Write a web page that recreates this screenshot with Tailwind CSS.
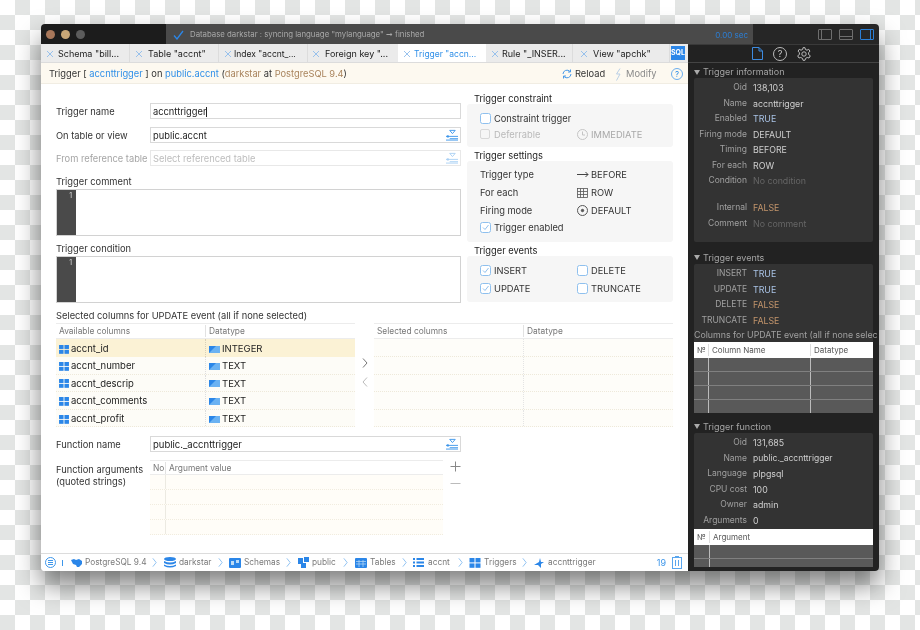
<!DOCTYPE html>
<html>
<head>
<meta charset="utf-8">
<script src="https://cdn.jsdelivr.net/npm/@tailwindcss/browser@4"></script>
</head>
<body class="m-0">
<svg width="0" height="0" class="absolute">
  <symbol id="grid" viewBox="0 0 11 10"><rect x="0" y="0" width="5" height="4.4" fill="#2b86e8"/><rect x="6" y="0" width="5" height="4.4" fill="#2b86e8"/><rect x="0" y="5.4" width="5" height="4.4" fill="#2b86e8"/><rect x="6" y="5.4" width="5" height="4.4" fill="#2b86e8"/></symbol>
  <symbol id="dtype" viewBox="0 0 11 7"><rect width="11" height="7" fill="#2b86e8"/><path d="M0 7 L7 0 H11 V7Z" fill="#6bb2f2"/></symbol>
  <symbol id="pick" viewBox="0 0 13 12" fill="none" stroke="currentColor"><path d="M0 7.5H13M4 10H13M0 11.5H13" stroke-width="1"/><path d="M4 1H10L7 4.5Z" fill="none" stroke-width="1"/><circle cx="2" cy="7.5" r="1.3" fill="currentColor" stroke="none"/></symbol>
  <symbol id="chev" viewBox="0 0 6 12" fill="none"><path d="M1 1L5 6L1 11" stroke="#7db8ef" stroke-width="1"/></symbol>
  <symbol id="check" viewBox="0 0 11 11" fill="none"><rect x=".5" y=".5" width="10" height="10" rx="2" fill="#fff" stroke="#8fc0ee"/><path d="M3 5.5L5 7.5L8.5 3" stroke="#8fc0ee"/></symbol>
  <symbol id="box" viewBox="0 0 11 11" fill="none"><rect x=".5" y=".5" width="10" height="10" rx="2" fill="#fff" stroke="#8fc0ee"/></symbol>
  <symbol id="x" viewBox="0 0 8 8" fill="none"><path d="M1 1L7 7M7 1L1 7" stroke="#8fbcec" stroke-width=".9"/></symbol>
</svg>

<div class="w-[920px] h-[630px] overflow-hidden pt-[24px] pl-[41px] font-['Inter',sans-serif] bg-[conic-gradient(#e3e5e4_25%,#ffffff_0_50%,#e3e5e4_0_75%,#ffffff_0)] bg-[length:30px_30px]">
  <div class="w-[838px] h-[547px] flex flex-col rounded-[4px] overflow-hidden shadow-[0_14px_26px_rgba(0,0,0,0.5)] blur-[0.25px]">

    <!-- title bar -->
    <div class="h-[20px] flex shrink-0">
      <div class="w-[125px] bg-[#1c1c1c] flex items-center gap-[6px] pl-[5px]">
        <span class="w-[9px] h-[9px] rounded-full bg-[#a8775a]"></span>
        <span class="w-[9px] h-[9px] rounded-full bg-[#c9a777]"></span>
        <span class="w-[9px] h-[9px] rounded-full bg-[#5c5c5c]"></span>
      </div>
      <div class="w-[587px] bg-[#4a4a4a] flex items-center pl-[7px] pr-[5px] pt-[2px] text-[7.8px] text-[#a9a9a9]">
        <svg class="w-[11px] h-[10px] mr-[6px]" viewBox="0 0 11 10" fill="none"><path d="M1 5.5L4 9L10 1" stroke="#2b86e8" stroke-width="1.3"/></svg>
        <span>Database darkstar : syncing language "mylanguage" ➞ finished</span>
        <span class="ml-auto text-[#2b7fd6] text-[8px]">0.00 sec</span>
      </div>
      <div class="flex-1 bg-[#262626] flex items-center justify-end gap-[7px] pr-[5px]">
        <span class="w-[14px] h-[11px] border border-[#6e6e6e] rounded-[1px] flex"><span class="w-[3px] border-r border-[#6e6e6e]"></span></span>
        <span class="w-[14px] h-[11px] border border-[#6e6e6e] rounded-[1px] flex items-end"><span class="w-full h-[3px] border-t border-[#6e6e6e]"></span></span>
        <span class="w-[14px] h-[11px] border border-[#2b7fd6] rounded-[1px] flex justify-end"><span class="w-[3px] border-l border-[#2b7fd6]"></span></span>
      </div>
    </div>

    <div class="flex flex-1 min-h-0">
      <!-- main -->
      <div class="w-[647px] bg-white flex flex-col">
        <!-- tabs -->
        <div class="h-[19px] flex shrink-0 bg-[#ebebeb] text-[9px] text-[#222] border-b border-[#dcdcdc]">
          <div class="w-[89px] flex items-center pl-[5px] pt-[2px] gap-[4px] border-r border-[#dcdcdc]"><svg class="w-[8px] h-[8px] shrink-0"><use href="#x"/></svg><span>Schema "bill...</span></div>
          <div class="w-[89px] flex items-center pl-[5px] pt-[2px] gap-[5px] border-r border-[#dcdcdc]"><svg class="w-[8px] h-[8px] shrink-0"><use href="#x"/></svg><span>Table "accnt"</span></div>
          <div class="w-[89px] flex items-center pl-[5px] pt-[2px] gap-[2px] border-r border-[#dcdcdc]"><svg class="w-[8px] h-[8px] shrink-0"><use href="#x"/></svg><span class="text-[8.5px]">Index "accnt_...</span></div>
          <div class="w-[90px] flex items-center pl-[4px] pt-[2px] gap-[5px]"><svg class="w-[8px] h-[8px] shrink-0"><use href="#x"/></svg><span>Foreign key "...</span></div>
          <div class="w-[88px] flex items-center pl-[5px] pt-[2px] gap-[3px] bg-white text-[#2f8fe8]"><svg class="w-[8px] h-[8px] shrink-0"><use href="#x"/></svg><span class="text-[8.5px]">Trigger "accn...</span></div>
          <div class="w-[87px] flex items-center pl-[5px] pt-[2px] gap-[3px] border-r border-[#dcdcdc]"><svg class="w-[8px] h-[8px] shrink-0"><use href="#x"/></svg><span>Rule "_INSER...</span></div>
          <div class="w-[97px] flex items-center pl-[7px] pt-[2px] gap-[5px] border-r border-[#dcdcdc]"><svg class="w-[8px] h-[8px] shrink-0"><use href="#x"/></svg><span>View "apchk"</span></div>
          <div class="flex-1 flex items-center justify-start pl-[1px]"><span class="w-[14px] h-[14px] bg-[#2b86e8] text-white text-[7px] font-bold leading-[13px] text-center">SQL</span></div>
        </div>
        <!-- info bar -->
        <div class="h-[21px] flex items-center shrink-0 bg-[#fdf9f0] pl-[8px] pr-[5px] pt-[2px] text-[9.3px] text-[#333] border-b border-[#f1ede3]">
          <span>Trigger [ <span class="text-[#2f8fe8]">accnttrigger</span> ] on <span class="text-[#2f8fe8]">public.accnt</span> (<span class="text-[#a9845d]">darkstar</span> at <span class="text-[#a9845d]">PostgreSQL 9.4</span>)</span>
          <svg class="ml-auto w-[10px] h-[10px]" viewBox="0 0 10 10" fill="none" stroke="#4a9ae8"><path d="M1 5A4 4 0 0 1 8 2.5M9 5A4 4 0 0 1 2 7.5"/><path d="M8.5 .5V3H6M1.5 9.5V7H4"/></svg>
          <span class="ml-[3px] w-[40px]">Reload</span>
          <svg class="w-[7px] h-[13px]" viewBox="0 0 7 13" fill="none" stroke="#b9cfe6"><path d="M5 .5L1.5 6H5L1.5 12.5"/></svg>
          <span class="ml-[4px] w-[45px] text-[#8a8a8a]">Modify</span>
          <span class="w-[12px] h-[12px] rounded-full border border-[#6caeee] text-[#2f8fe8] text-[8px] leading-[10px] text-center">?</span>
        </div>

        <!-- upper form -->
        <div class="h-[225px] flex shrink-0 text-[9.3px] text-[#333]">
          <div class="w-[405px] ml-[15px] pt-[19px]">
            <div class="flex h-[16px] items-center mb-[8px]"><span class="w-[94px] pt-[2px]">Trigger name</span><div class="flex-1 h-full border border-[#d9d9d9] flex items-center pl-[2px] pt-[1px] text-[#222]"><span class="border-r border-[#222] leading-[10px]">accnttrigger</span></div></div>
            <div class="flex h-[16px] items-center mb-[7px]"><span class="w-[94px] pt-[2px]">On table or view</span><div class="flex-1 h-full border border-[#d9d9d9] flex items-center pl-[2px] pr-[2px] text-[#222] justify-between"><span class="pt-[1px]">public.accnt</span><svg class="w-[12px] h-[12px] text-[#3d96ea]"><use href="#pick"/></svg></div></div>
            <div class="flex h-[16px] items-center"><span class="w-[94px] pt-[2px] text-[#a5a5a5] whitespace-nowrap">From reference table</span><div class="flex-1 h-full border border-[#e8e8e8] flex items-center pl-[2px] pr-[2px] text-[#bdbdbd] justify-between"><span class="pt-[1px]">Select referenced table</span><svg class="w-[12px] h-[12px] text-[#a9d0f4]"><use href="#pick"/></svg></div></div>
            <div class="h-[12px] leading-[12px] mt-[10px] mb-[1px]">Trigger comment</div>
            <div class="h-[47px] border border-[#d2d2d2] flex"><div class="w-[19px] bg-[#4a4a4a] text-[7px] text-[#ddd] text-right pr-[4px] leading-[11px]">1</div></div>
            <div class="h-[12px] leading-[12px] mt-[7px] mb-[1px]">Trigger condition</div>
            <div class="h-[47px] border border-[#d2d2d2] flex"><div class="w-[19px] bg-[#4a4a4a] text-[7px] text-[#ddd] text-right pr-[4px] leading-[11px]">1</div></div>
          </div>
          <div class="w-[206px] ml-[6px] pt-[8px]">
            <div class="h-[12px] leading-[12px] pl-[7px] pt-[1px] text-[#222]">Trigger constraint</div>
            <div class="h-[43px] bg-[#f6f6f6] rounded-[3px] pl-[13px] pt-[8px]">
              <div class="flex items-center h-[12px] mb-[4px]"><svg class="w-[11px] h-[11px] mr-[3px]"><use href="#box"/></svg><span class="pt-[1px]">Constraint trigger</span></div>
              <div class="flex items-center h-[12px] text-[#b9b9b9]"><span class="w-[10px] h-[10px] rounded-[2px] border border-[#d8d8d8] mr-[4px]"></span><span class="w-[83px] pt-[1px]">Deferrable</span><svg class="w-[11px] h-[11px] mr-[3px]" viewBox="0 0 11 11" fill="none" stroke="#c4c4c4"><circle cx="5.5" cy="5.5" r="5"/><path d="M5.5 2.5V6H8"/></svg><span class="text-[#a8a8a8] pt-[1px]">IMMEDIATE</span></div>
            </div>
            <div class="h-[12px] leading-[12px] pl-[7px] pt-[1px] mt-[2px] text-[#222]">Trigger settings</div>
            <div class="h-[81px] bg-[#f6f6f6] rounded-[3px] pl-[13px] pt-[7px]">
              <div class="flex items-center h-[13px] mb-[5px]"><span class="w-[97px] pt-[1px]">Trigger type</span><svg class="w-[12px] h-[7px] mr-[2px]" viewBox="0 0 12 7" fill="none" stroke="#444"><path d="M0 3.5H11M8.5 1L11 3.5L8.5 6"/></svg><span class="pt-[1px]">BEFORE</span></div>
              <div class="flex items-center h-[13px] mb-[5px]"><span class="w-[97px] pt-[1px]">For each</span><svg class="w-[11px] h-[10px] mr-[3px]" viewBox="0 0 11 10" fill="none" stroke="#555" stroke-width=".8"><rect x=".5" y=".5" width="10" height="9"/><path d="M3.5 .5V9.5M6.5 .5V9.5M.5 3.5H10.5M.5 6.5H10.5"/></svg><span class="pt-[1px]">ROW</span></div>
              <div class="flex items-center h-[13px] mb-[4px]"><span class="w-[97px] pt-[1px]">Firing mode</span><svg class="w-[11px] h-[11px] mr-[3px]" viewBox="0 0 11 11" fill="none" stroke="#555"><circle cx="5.5" cy="5.5" r="5"/><circle cx="5.5" cy="5.5" r="1.2" fill="#555"/></svg><span class="pt-[1px]">DEFAULT</span></div>
              <div class="flex items-center h-[13px]"><svg class="w-[11px] h-[11px] mr-[3px]"><use href="#check"/></svg><span class="pt-[1px]">Trigger enabled</span></div>
            </div>
            <div class="h-[12px] leading-[12px] pl-[7px] pt-[1px] mt-[2px] text-[#222]">Trigger events</div>
            <div class="h-[46px] bg-[#f6f6f6] rounded-[3px] pl-[13px] pt-[8px]">
              <div class="flex items-center h-[13px] mb-[5px]"><svg class="w-[11px] h-[11px] mr-[3px]"><use href="#check"/></svg><span class="w-[83px] pt-[1px]">INSERT</span><svg class="w-[11px] h-[11px] mr-[3px]"><use href="#box"/></svg><span class="pt-[1px]">DELETE</span></div>
              <div class="flex items-center h-[13px]"><svg class="w-[11px] h-[11px] mr-[3px]"><use href="#check"/></svg><span class="w-[83px] pt-[1px]">UPDATE</span><svg class="w-[11px] h-[11px] mr-[3px]"><use href="#box"/></svg><span class="pt-[1px]">TRUNCATE</span></div>
            </div>
          </div>
        </div>

        <!-- columns -->
        <div class="pl-[15px] text-[9.5px] text-[#333] flex-1 min-h-0">
          <div class="h-[12px] leading-[12px] mt-[1px] mb-[1px] text-[9.3px]">Selected columns for UPDATE event (all if none selected)</div>
          <div class="flex">
            <div class="w-[299px]">
              <div class="h-[16px] flex items-center text-[8.4px] text-[#777] border-y border-[#ececec]"><span class="w-[150px] pl-[3px] border-r border-[#e2e2e2]">Available columns</span><span class="pl-[3px]">Datatype</span></div>
              <div class="h-[18px] flex items-center bg-[#fbf2d5] text-[#222]"><span class="w-[150px] pl-[3px] pt-[2px] flex items-center gap-[2px] border-r border-dotted border-[#d8d0b8] h-full"><svg class="w-[10px] h-[9px]"><use href="#grid"/></svg>accnt_id</span><span class="pl-[3px] pt-[2px] flex items-center gap-[2px]"><svg class="w-[11px] h-[7px]"><use href="#dtype"/></svg>INTEGER</span></div>
              <div class="h-[17.6px] flex items-center bg-[#fdfcf7] border-b border-dotted border-[#eee9da] text-[#222]"><span class="w-[150px] pl-[3px] pt-[2px] flex items-center gap-[2px] border-r border-dotted border-[#ddd] h-full"><svg class="w-[10px] h-[9px]"><use href="#grid"/></svg>accnt_number</span><span class="pl-[3px] pt-[2px] flex items-center gap-[2px]"><svg class="w-[11px] h-[7px]"><use href="#dtype"/></svg>TEXT</span></div>
              <div class="h-[17.6px] flex items-center bg-[#fdfcf7] border-b border-dotted border-[#eee9da] text-[#222]"><span class="w-[150px] pl-[3px] pt-[2px] flex items-center gap-[2px] border-r border-dotted border-[#ddd] h-full"><svg class="w-[10px] h-[9px]"><use href="#grid"/></svg>accnt_descrip</span><span class="pl-[3px] pt-[2px] flex items-center gap-[2px]"><svg class="w-[11px] h-[7px]"><use href="#dtype"/></svg>TEXT</span></div>
              <div class="h-[17.6px] flex items-center bg-[#fdfcf7] border-b border-dotted border-[#eee9da] text-[#222]"><span class="w-[150px] pl-[3px] pt-[2px] flex items-center gap-[2px] border-r border-dotted border-[#ddd] h-full"><svg class="w-[10px] h-[9px]"><use href="#grid"/></svg>accnt_comments</span><span class="pl-[3px] pt-[2px] flex items-center gap-[2px]"><svg class="w-[11px] h-[7px]"><use href="#dtype"/></svg>TEXT</span></div>
              <div class="h-[17.6px] flex items-center bg-[#fdfcf7] border-b border-dotted border-[#eee9da] text-[#222]"><span class="w-[150px] pl-[3px] pt-[2px] flex items-center gap-[2px] border-r border-dotted border-[#ddd] h-full"><svg class="w-[10px] h-[9px]"><use href="#grid"/></svg>accnt_profit</span><span class="pl-[3px] pt-[2px] flex items-center gap-[2px]"><svg class="w-[11px] h-[7px]"><use href="#dtype"/></svg>TEXT</span></div>
            </div>
            <div class="w-[19px] flex flex-col items-center pt-[35px] gap-[9px]">
              <svg class="w-[6px] h-[10px]" viewBox="0 0 6 10" fill="none" stroke="#777"><path d="M1 .5L5 5L1 9.5"/></svg>
              <svg class="w-[6px] h-[10px]" viewBox="0 0 6 10" fill="none" stroke="#bbb"><path d="M5 .5L1 5L5 9.5"/></svg>
            </div>
            <div class="w-[299px]">
              <div class="h-[16px] flex items-center text-[8.4px] text-[#777] border-y border-[#ececec]"><span class="w-[150px] pl-[3px] border-r border-[#e2e2e2]">Selected columns</span><span class="pl-[3px]">Datatype</span></div>
              <div class="h-[18px] flex bg-[#fefdf9] border-b border-dotted border-[#eee9da]"><span class="w-[150px] border-r border-dotted border-[#e4e4e4]"></span></div>
              <div class="h-[17.6px] flex bg-[#fefdf9] border-b border-dotted border-[#eee9da]"><span class="w-[150px] border-r border-dotted border-[#e4e4e4]"></span></div>
              <div class="h-[17.6px] flex bg-[#fefdf9] border-b border-dotted border-[#eee9da]"><span class="w-[150px] border-r border-dotted border-[#e4e4e4]"></span></div>
              <div class="h-[17.6px] flex bg-[#fefdf9] border-b border-dotted border-[#eee9da]"><span class="w-[150px] border-r border-dotted border-[#e4e4e4]"></span></div>
              <div class="h-[17.6px] flex bg-[#fefdf9] border-b border-dotted border-[#eee9da]"><span class="w-[150px] border-r border-dotted border-[#e4e4e4]"></span></div>
            </div>
          </div>

          <div class="flex h-[16px] items-center mt-[9px] mb-[8px] w-[405px]"><span class="w-[94px] pt-[2px] text-[9.3px]">Function name</span><div class="flex-1 h-full border border-[#d9d9d9] flex items-center pl-[2px] pr-[2px] text-[#222] justify-between"><span class="pt-[1px]">public._accnttrigger</span><svg class="w-[12px] h-[12px] text-[#3d96ea]"><use href="#pick"/></svg></div></div>

          <div class="flex">
            <div class="w-[94px] pt-[4px] leading-[12px] text-[9.3px]">Function arguments<br>(quoted strings)</div>
            <div class="w-[293px]">
              <div class="h-[15px] flex items-center text-[8.4px] text-[#777] border-y border-[#ececec]"><span class="w-[16px] pl-[3px] border-r border-[#e2e2e2]">No</span><span class="pl-[3px]">Argument value</span></div>
              <div class="h-[15px] bg-[#fffdf8] border-b border-dotted border-[#f1ecdf]"><div class="w-[16px] h-full border-r border-[#eceae2]"></div></div>
              <div class="h-[15px] bg-[#fffdf8] border-b border-dotted border-[#f1ecdf]"><div class="w-[16px] h-full border-r border-[#eceae2]"></div></div>
              <div class="h-[15px] bg-[#fffdf8] border-b border-dotted border-[#f1ecdf]"><div class="w-[16px] h-full border-r border-[#eceae2]"></div></div>
              <div class="h-[15px] bg-[#fffdf8] border-b border-dotted border-[#f1ecdf]"><div class="w-[16px] h-full border-r border-[#eceae2]"></div></div>
            </div>
            <div class="w-[24px] flex flex-col items-center pt-[1px] gap-[11px]">
              <svg class="w-[11px] h-[11px]" viewBox="0 0 11 11" stroke="#888"><path d="M5.5 .5V10.5M.5 5.5H10.5"/></svg>
              <svg class="w-[11px] h-[1px]" viewBox="0 0 11 1" stroke="#bbb"><path d="M.5 .5H10.5"/></svg>
            </div>
          </div>
        </div>

        <!-- status bar -->
        <div class="h-[18px] flex items-center shrink-0 border-t border-[#dcdcdc] text-[8.3px] text-[#7a7a7a] pl-[4px] pr-[6px]">
          <svg class="w-[11px] h-[11px] mr-[6px]" viewBox="0 0 11 11" fill="none" stroke="#3d96ea"><circle cx="5.5" cy="5.5" r="5"/><path d="M3 3.5H8M3 5.5H8M3 7.5H8"/></svg>
          <span class="w-[1px] h-[6px] bg-[#3d96ea] mr-[8px]"></span>
          <div class="w-[93px] flex items-center gap-[3px] pr-[7px] justify-between"><svg class="w-[11px] h-[8px] shrink-0" viewBox="0 0 11 8"><path d="M0 1 L3 0 L5 1 L8 0 L11 2 V5 L8 8 H6 L5 6 L2 5Z" fill="#2b86e8"/></svg><span class="whitespace-nowrap mr-auto">PostgreSQL 9.4</span><svg class="w-[5px] h-[11px] shrink-0"><use href="#chev"/></svg></div>
          <div class="w-[65px] flex items-center gap-[3px] pr-[6px]"><svg class="w-[12px] h-[11px] shrink-0" viewBox="0 0 12 11"><ellipse cx="6" cy="2" rx="6" ry="2" fill="#2b86e8"/><path d="M0 4Q6 7 12 4V6Q6 9 0 6ZM0 7.500Q6 10.500 12 7.500V9Q6 12 0 9Z" fill="#2b86e8"/></svg><span>darkstar</span><svg class="ml-auto w-[5px] h-[11px] shrink-0"><use href="#chev"/></svg></div>
          <div class="w-[69px] flex items-center gap-[3px] pr-[7px]"><svg class="w-[12px] h-[10px] shrink-0" viewBox="0 0 12 10"><rect width="12" height="10" rx="1" fill="#2b86e8"/><path d="M2 3H5V7H2ZM7 2H10V5H7Z" fill="#bcdcf7"/></svg><span>Schemas</span><svg class="ml-auto w-[5px] h-[11px] shrink-0"><use href="#chev"/></svg></div>
          <div class="w-[57px] flex items-center gap-[3px] pr-[7px]"><svg class="w-[11px] h-[11px] shrink-0" viewBox="0 0 11 11"><path d="M0 1H5V7H0ZM6 0H11V5H6ZM3 6H8V11H3Z" fill="#2b86e8"/></svg><span>public</span><svg class="ml-auto w-[5px] h-[11px] shrink-0"><use href="#chev"/></svg></div>
          <div class="w-[58px] flex items-center gap-[3px] pr-[6px]"><svg class="w-[12px] h-[10px] shrink-0" viewBox="0 0 12 10"><rect width="12" height="10" rx="1" fill="#2b86e8"/><path d="M1 3.500H11M1 6H11M4 2V9M8 2V9" stroke="#bcdcf7" stroke-width=".7"/></svg><span>Tables</span><svg class="ml-auto w-[5px] h-[11px] shrink-0"><use href="#chev"/></svg></div>
          <div class="w-[56px] flex items-center gap-[4px] pr-[6px]"><svg class="w-[11px] h-[9px] shrink-0" viewBox="0 0 11 9"><path d="M0 0H2V2H0ZM3.500 0H11V2H3.500ZM0 3.500H2V5.500H0ZM3.500 3.500H11V5.500H3.500ZM0 7H2V9H0ZM3.500 7H11V9H3.500Z" fill="#2b86e8"/></svg><span>accnt</span><svg class="ml-auto w-[5px] h-[11px] shrink-0"><use href="#chev"/></svg></div>
          <div class="w-[65px] flex items-center gap-[3px] pr-[7px]"><svg class="w-[12px] h-[10px] shrink-0"><use href="#grid"/></svg><span>Triggers</span><svg class="ml-auto w-[5px] h-[11px] shrink-0"><use href="#chev"/></svg></div>
          <div class="flex items-center gap-[4px]"><svg class="w-[10px] h-[10px] shrink-0" viewBox="0 0 10 10"><path d="M0 7L5 4L6 0L7 4H10L7 6V10L4 7Z" fill="#2b86e8"/></svg><span>accnttrigger</span></div>
          <span class="ml-auto text-[#3d96ea] mr-[6px] text-[9px]">19</span>
          <svg class="w-[10px] h-[13px]" viewBox="0 0 10 13" fill="none" stroke="#5aa6ee"><rect x=".5" y="1.500" width="9" height="11"/><path d="M3 0.500H7M3.500 4V10M6.500 4V10"/></svg>
        </div>
      </div>

      <!-- right panel -->
      <div class="w-[191px] bg-[#222] border-t border-[#3a3a3a] text-[8.5px] text-[#cfcfcf]">
        <div class="h-[18px] flex items-center justify-center gap-[10px] border-b border-[#444] pr-[4px]">
          <svg class="w-[11px] h-[13px]" viewBox="0 0 11 13" fill="none" stroke="#3d8be0"><path d="M.5 .5H7L10.500 4V12.500H.5ZM7 .5V4H10.500"/></svg>
          <span class="w-[14px] h-[14px] rounded-full border border-[#bbb] text-[#ccc] text-[9px] leading-[12px] text-center">?</span>
          <svg class="w-[14px] h-[14px]" viewBox="0 0 14 14" fill="none" stroke="#bbb"><circle cx="7" cy="7" r="2.200"/><path d="M6 .7H8L8.400 2.500L10 3.200L11.700 2.300L13 4.200L11.600 5.500V7.500L13.300 8.800L12 11L10.200 10.500L8.600 11.400L8 13.300H6L5.500 11.400L3.800 10.500L2 11L.7 8.800L2.400 7.500V5.500L1 4.200L2.300 2.300L4 3.200L5.600 2.500Z"/></svg>
        </div>
        <div class="px-[6px]">
          <div class="h-[15px] pt-[3px] flex items-center gap-[3px] text-[9px] text-[#a5a5a5]"><span class="w-0 h-0 border-x-[3px] border-x-transparent border-t-[5px] border-t-[#aaa]"></span>Trigger information</div>
          <div class="h-[164px] bg-[#333] rounded-[2px] pt-[1px]">
            <div class="flex h-[15.500px] pt-[2px] items-center"><span class="w-[53px] text-right text-[#a0a0a0]">Oid</span><span class="ml-[6px] text-[8.800px]">138,103</span></div>
            <div class="flex h-[15.500px] pt-[2px] items-center"><span class="w-[53px] text-right text-[#a0a0a0]">Name</span><span class="ml-[6px] text-[8.800px]">accnttrigger</span></div>
            <div class="flex h-[15.500px] pt-[2px] items-center"><span class="w-[53px] text-right text-[#a0a0a0]">Enabled</span><span class="ml-[6px] text-[8.800px] text-[#a9c3e6]">TRUE</span></div>
            <div class="flex h-[15.500px] pt-[2px] items-center"><span class="w-[53px] text-right text-[#a0a0a0] whitespace-nowrap">Firing mode</span><span class="ml-[6px] text-[8.800px]">DEFAULT</span></div>
            <div class="flex h-[15.500px] pt-[2px] items-center"><span class="w-[53px] text-right text-[#a0a0a0]">Timing</span><span class="ml-[6px] text-[8.800px]">BEFORE</span></div>
            <div class="flex h-[15.500px] pt-[2px] items-center"><span class="w-[53px] text-right text-[#a0a0a0]">For each</span><span class="ml-[6px] text-[8.800px]">ROW</span></div>
            <div class="flex h-[15.500px] pt-[2px] items-center mb-[11.500px]"><span class="w-[53px] text-right text-[#a0a0a0]">Condition</span><span class="ml-[6px] text-[8.800px] text-[#666]">No condition</span></div>
            <div class="flex h-[15.500px] pt-[2px] items-center"><span class="w-[53px] text-right text-[#a0a0a0]">Internal</span><span class="ml-[6px] text-[8.800px] text-[#c2946b]">FALSE</span></div>
            <div class="flex h-[15.500px] pt-[2px] items-center"><span class="w-[53px] text-right text-[#a0a0a0]">Comment</span><span class="ml-[6px] text-[8.800px] text-[#666]">No comment</span></div>
          </div>
          <div class="h-[15px] pt-[2px] mt-[7px] flex items-center gap-[3px] text-[9px] text-[#a5a5a5]"><span class="w-0 h-0 border-x-[3px] border-x-transparent border-t-[5px] border-t-[#aaa]"></span>Trigger events</div>
          <div class="h-[148px] bg-[#333] rounded-[2px] pt-[1px]">
            <div class="flex h-[15.500px] pt-[2px] items-center"><span class="w-[53px] text-right text-[#a0a0a0]">INSERT</span><span class="ml-[6px] text-[8.800px] text-[#a9c3e6]">TRUE</span></div>
            <div class="flex h-[15.500px] pt-[2px] items-center"><span class="w-[53px] text-right text-[#a0a0a0]">UPDATE</span><span class="ml-[6px] text-[8.800px] text-[#a9c3e6]">TRUE</span></div>
            <div class="flex h-[15.500px] pt-[2px] items-center"><span class="w-[53px] text-right text-[#a0a0a0]">DELETE</span><span class="ml-[6px] text-[8.800px] text-[#c2946b]">FALSE</span></div>
            <div class="flex h-[15.500px] pt-[2px] items-center"><span class="w-[53px] text-right text-[#a0a0a0]">TRUNCATE</span><span class="ml-[6px] text-[8.800px] text-[#c2946b]">FALSE</span></div>
            <div class="h-[15px] leading-[16px] text-[8.800px] whitespace-nowrap text-[#a0a0a0]">Columns for UPDATE event (all if none selec</div>
            <div class="h-[16px] bg-white flex items-center text-[8px] text-[#555]"><span class="w-[15px] pl-[3px] border-r border-[#ddd]">№</span><span class="w-[102px] pl-[3px] border-r border-[#ddd]">Column Name</span><span class="pl-[3px]">Datatype</span></div>
            <div class="h-[14px] bg-[#595959] flex border-b border-[#808080]"><span class="w-[15px] border-r border-[#bbb]"></span><span class="w-[102px] border-r border-[#bbb]"></span></div>
            <div class="h-[14px] bg-[#595959] flex border-b border-[#808080]"><span class="w-[15px] border-r border-[#bbb]"></span><span class="w-[102px] border-r border-[#bbb]"></span></div>
            <div class="h-[14px] bg-[#595959] flex border-b border-[#808080]"><span class="w-[15px] border-r border-[#bbb]"></span><span class="w-[102px] border-r border-[#bbb]"></span></div>
            <div class="h-[13px] bg-[#595959] flex"><span class="w-[15px] border-r border-[#bbb]"></span><span class="w-[102px] border-r border-[#bbb]"></span></div>
          </div>
          <div class="h-[15px] pt-[2px] mt-[6px] flex items-center gap-[3px] text-[9px] text-[#a5a5a5]"><span class="w-0 h-0 border-x-[3px] border-x-transparent border-t-[5px] border-t-[#aaa]"></span>Trigger function</div>
          <div class="h-[133px] bg-[#333] rounded-[2px] pt-[1px]">
            <div class="flex h-[15.500px] pt-[2px] items-center"><span class="w-[53px] text-right text-[#a0a0a0]">Oid</span><span class="ml-[6px] text-[8.800px]">131,685</span></div>
            <div class="flex h-[15.500px] pt-[2px] items-center"><span class="w-[53px] text-right text-[#a0a0a0]">Name</span><span class="ml-[6px] text-[8.500px]">public._accnttrigger</span></div>
            <div class="flex h-[15.500px] pt-[2px] items-center"><span class="w-[53px] text-right text-[#a0a0a0]">Language</span><span class="ml-[6px] text-[8.800px]">plpgsql</span></div>
            <div class="flex h-[15.500px] pt-[2px] items-center"><span class="w-[53px] text-right text-[#a0a0a0]">CPU cost</span><span class="ml-[6px] text-[8.800px]">100</span></div>
            <div class="flex h-[15.500px] pt-[2px] items-center"><span class="w-[53px] text-right text-[#a0a0a0]">Owner</span><span class="ml-[6px] text-[8.800px]">admin</span></div>
            <div class="flex h-[15.500px] pt-[2px] items-center mb-[1.500px]"><span class="w-[53px] text-right text-[#a0a0a0]">Arguments</span><span class="ml-[6px] text-[8.800px]">0</span></div>
            <div class="h-[16px] bg-white flex items-center text-[8px] text-[#555]"><span class="w-[16px] pl-[3px] border-r border-[#ddd]">№</span><span class="pl-[3px]">Argument</span></div>
            <div class="h-[14px] bg-[#595959] border-b border-[#808080]"><div class="w-[16px] h-full border-r border-[#bbb]"></div></div>
            <div class="h-[8px] bg-[#595959]"><div class="w-[16px] h-full border-r border-[#bbb]"></div></div>
          </div>
        </div>
      </div>
    </div>
  </div>
</div>
</body>
</html>
